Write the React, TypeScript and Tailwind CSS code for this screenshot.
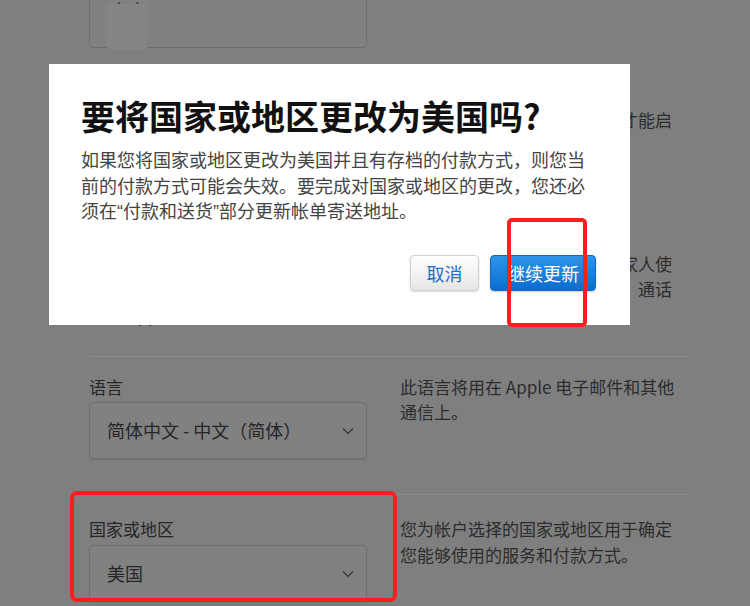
import React from "react";

function Chevron() {
  return (
    <svg width="12" height="8" viewBox="0 0 12 8" fill="none">
      <path d="M1 1.5 L6 6.5 L11 1.5" stroke="#3a3a3a" strokeWidth="1.3" />
    </svg>
  );
}

function SelectBox({ value, className = "" }: { value: string; className?: string }) {
  return (
    <div
      className={`flex h-[57px] w-[278px] items-center justify-between rounded-[5px] border border-[#6d6d6d] bg-[#818181] pl-[17px] pr-[12px] text-[18px] text-[#262626] shadow-[0_1px_1px_rgba(0,0,0,0.08)] ${className}`}
    >
      <span>{value}</span>
      <Chevron />
    </div>
  );
}

export default function App() {
  return (
    <div className="relative h-[606px] w-[750px] overflow-hidden bg-[#7f7f7f] font-['Noto_Sans_CJK_SC','Noto_Sans',sans-serif]">
      {/* Page (dimmed behind the dialog) */}
      <div className="pl-[89px] pr-[62px]">
        {/* Section 1 */}
        <div className="flex h-[357px] gap-[33px] border-b border-[#8a8a8a]">
          <div className="flex w-[278px] flex-col">
            <div className="-mt-[9px] h-[57px] w-[278px] rounded-[5px] border border-[#6d6d6d] bg-[#818181] pl-[22px] pt-[8px] text-[17px] leading-[20px] text-[#2a2a2a]">
              名字
            </div>
            <div className="mb-[29px] mt-auto text-[17px] leading-[25px] text-[#2a2a2a]">
              管理 Apple ID <span className="text-[#1d4f7a]">更改</span>
            </div>
          </div>
          <div className="w-[288px] whitespace-nowrap pt-[107px] text-[17px] leading-[25px] text-[#2c2c2c]">
            <p>电子邮件地址需要经过验证后才能启</p>
            <p>用。</p>
            <p className="mt-[94px]">您的电话号码可用于与朋友和家人使</p>
            <p>进行联系以及使用信息和视频　通话</p>
          </div>
        </div>

        {/* Section 2: language */}
        <div className="flex gap-[33px] border-b border-[#8a8a8a] pb-[35px] pt-[17px]">
          <div className="w-[278px]">
            <div className="text-[17px] leading-[25px] text-[#262626]">语言</div>
            <SelectBox className="mt-[3px]" value="简体中文 - 中文（简体）" />
          </div>
          <div className="w-[288px] text-[17px] leading-[25px] text-[#2c2c2c]">
            <p className="whitespace-nowrap">此语言将用在 Apple 电子邮件和其他</p>
            <p>通信上。</p>
          </div>
        </div>

        {/* Section 3: country */}
        <div className="flex gap-[33px] pt-[21px]">
          <div className="w-[278px]">
            <div className="text-[17px] leading-[25px] text-[#262626]">国家或地区</div>
            <SelectBox className="mt-[4px]" value="美国" />
          </div>
          <div className="w-[288px] whitespace-nowrap text-[17px] leading-[26px] text-[#2c2c2c]">
            <p>您为帐户选择的国家或地区用于确定</p>
            <p>您能够使用的服务和付款方式。</p>
          </div>
        </div>
      </div>

      {/* privacy mosaic over the name field */}
      <div className="absolute left-[107px] top-[4px] h-[45px] w-[40px] bg-[#858585]" />

      {/* Dialog */}
      <div className="absolute left-[49px] top-[64px] flex h-[261px] w-[581px] flex-col bg-white pb-[34px] pl-[32px] pr-[34px] pt-[32px]">
        <h1 className="whitespace-nowrap text-[34px] font-bold leading-[40px] text-[#111]">
          要将国家或地区更改为美国吗?
        </h1>
        <div className="mt-[11px] whitespace-nowrap text-[18px] leading-[25.5px] text-[#444]">
          <p>如果您将国家或地区更改为美国并且有存档的付款方式，则您当</p>
          <p>前的付款方式可能会失效。要完成对国家或地区的更改，您还必</p>
          <p>
            须在<span className="font-['Liberation_Sans',sans-serif]">“</span>付款和送货
            <span className="font-['Liberation_Sans',sans-serif]">”</span>部分更新帐单寄送地址。
          </p>
        </div>
        <div className="mt-auto flex justify-end gap-[11px]">
          <button className="flex h-[36px] w-[69px] items-center justify-center rounded-[4px] border border-[#cfcfcf] bg-gradient-to-b from-[#ffffff] to-[#e6e6e6] text-[18px] text-[#1f6fc4] shadow-[0_1px_2px_rgba(0,0,0,0.15)]">
            取消
          </button>
          <button className="flex h-[36px] w-[106px] items-center justify-center rounded-[4px] border border-[#0d69c8] bg-gradient-to-b from-[#2b95ea] to-[#0a6dd0] text-[18px] text-white shadow-[0_1px_2px_rgba(0,0,0,0.2)]">
            继续更新
          </button>
        </div>
      </div>

      {/* Red annotation frames */}
      <div className="absolute left-[507px] top-[218px] h-[109px] w-[80px] rounded-[5px] border-[4px] border-[#ff1e1e]" />
      <div className="absolute left-[70px] top-[491px] h-[111px] w-[327px] rounded-[7px] border-[4px] border-[#ff1e1e]" />
    </div>
  );
}
